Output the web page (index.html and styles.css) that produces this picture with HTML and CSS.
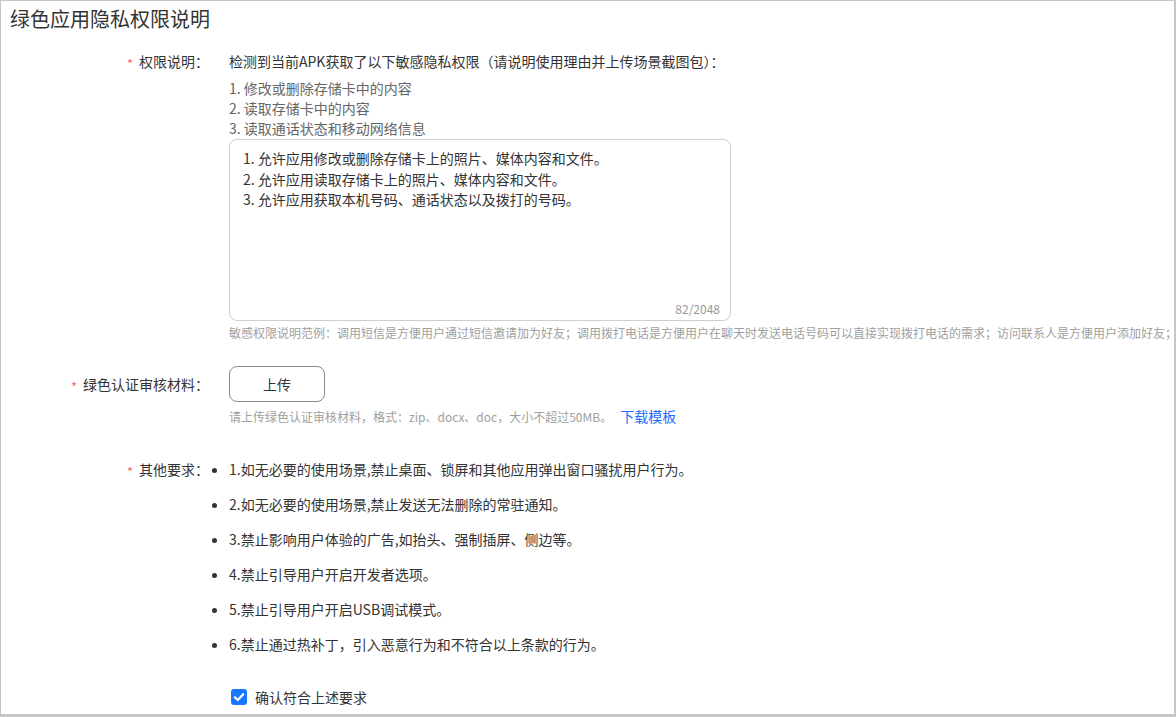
FILE: index.html
```html
<!DOCTYPE html>
<html lang="zh-CN">
<head>
<meta charset="utf-8">
<title>绿色应用隐私权限说明</title>
<link rel="stylesheet" href="styles.css">
</head>
<body>
<div class="page">
  <h1 class="title">绿色应用隐私权限说明</h1>

  <div class="row row-perm">
    <div class="label"><span class="req">*</span>权限说明：</div>
    <div class="content">
      <p class="intro">检测到当前APK获取了以下敏感隐私权限（请说明使用理由并上传场景截图包）：</p>
      <div class="perm-list">
        <div>1. 修改或删除存储卡中的内容</div>
        <div>2. 读取存储卡中的内容</div>
        <div>3. 读取通话状态和移动网络信息</div>
      </div>
      <div class="textarea-wrap">
        <textarea class="textarea">1. 允许应用修改或删除存储卡上的照片、媒体内容和文件。
2. 允许应用读取存储卡上的照片、媒体内容和文件。
3. 允许应用获取本机号码、通话状态以及拨打的号码。</textarea>
        <span class="count">82/2048</span>
      </div>
      <p class="hint hint-wide">敏感权限说明范例：调用短信是方便用户通过短信邀请加为好友；调用拨打电话是方便用户在聊天时发送电话号码可以直接实现拨打电话的需求；访问联系人是方便用户添加好友；</p>
    </div>
  </div>

  <div class="row row-upload">
    <div class="label label-tall"><span class="req">*</span>绿色认证审核材料：</div>
    <div class="content">
      <button class="upload-btn" type="button">上传</button>
      <p class="hint hint-upload">请上传绿色认证审核材料，格式：zip、docx、doc，大小不超过50MB。<a class="link" href="#">下载模板</a></p>
    </div>
  </div>

  <div class="row row-req">
    <div class="label"><span class="req">*</span>其他要求：</div>
    <div class="content">
      <ul class="req-list">
        <li>1.如无必要的使用场景,禁止桌面、锁屏和其他应用弹出窗口骚扰用户行为。</li>
        <li>2.如无必要的使用场景,禁止发送无法删除的常驻通知。</li>
        <li>3.禁止影响用户体验的广告,如抬头、强制插屏、侧边等。</li>
        <li>4.禁止引导用户开启开发者选项。</li>
        <li>5.禁止引导用户开启USB调试模式。</li>
        <li>6.禁止通过热补丁，引入恶意行为和不符合以上条款的行为。</li>
      </ul>
      <label class="confirm">
        <span class="checkbox"><svg viewBox="0 0 16 16" width="16" height="16"><path d="M3.8 8.2 L6.8 11 L12.2 5.3" fill="none" stroke="#fff" stroke-width="2.2" stroke-linecap="round" stroke-linejoin="round"/></svg></span>
        <span class="confirm-text">确认符合上述要求</span>
      </label>
    </div>
  </div>
</div>
</body>
</html>
```

FILE: styles.css
```css
* {
  box-sizing: border-box;
}

html, body {
  margin: 0;
  padding: 0;
  background: #ffffff;
}

body {
  font-family: "Noto Sans CJK SC", "Noto Sans", sans-serif;
  color: #333333;
  font-size: 14px;
}

.page {
  width: 1176px;
  height: 717px;
  overflow: hidden;
  border-style: solid;
  border-color: #c6c6c6;
  border-width: 1px 2px 3px 1px;
  padding-top: 4px;
}

.title {
  margin: 0 0 0 9px;
  font-size: 20px;
  line-height: 28px;
  font-weight: normal;
  color: #333333;
}

.row {
  display: flex;
  align-items: flex-start;
}

.label {
  flex: 0 0 208px;
  text-align: right;
  line-height: 20px;
  color: #333333;
  white-space: nowrap;
}

.label-tall {
  line-height: 36px;
}

.req {
  color: #f56c6c;
  margin-right: 6px;
  font-size: 13px;
  vertical-align: -2px;
}

.content {
  margin-left: 20px;
  flex: 1;
  min-width: 0;
}

.row-perm {
  margin-top: 18px;
}

.intro {
  margin: 0;
  line-height: 20px;
  color: #333333;
}

.perm-list {
  margin-top: 7px;
  line-height: 20px;
  color: #666666;
}

.textarea-wrap {
  position: relative;
  margin-top: 1px;
  width: 502px;
  height: 182px;
}

.textarea {
  display: block;
  width: 100%;
  height: 100%;
  border: 1px solid #cfcfcf;
  border-radius: 8px;
  padding: 8px 13px;
  font-family: inherit;
  font-size: 14px;
  line-height: 20.5px;
  color: #333333;
  resize: none;
  outline: none;
  background: #ffffff;
}

.count {
  position: absolute;
  right: 11px;
  bottom: 4px;
  font-size: 12px;
  line-height: 16px;
  color: #999999;
}

.hint {
  margin: 0;
  font-size: 12px;
  line-height: 18px;
  color: #a0a0a0;
  white-space: nowrap;
}

.hint-wide {
  margin-top: 3px;
}

.row-upload {
  margin-top: 24px;
}

.upload-btn {
  display: block;
  width: 96px;
  height: 36px;
  border: 1px solid #8a8a8a;
  border-radius: 8px;
  background: #ffffff;
  font-family: inherit;
  font-size: 14px;
  color: #333333;
  padding: 0;
  cursor: pointer;
}

.hint-upload {
  margin-top: 5px;
}

.link {
  color: #1a6dff;
  text-decoration: none;
  font-size: 14px;
  margin-left: 8px;
}

.row-req {
  margin-top: 33px;
}

.req-list {
  margin: 0;
  padding: 0;
  list-style: disc outside;
  display: flex;
  flex-direction: column;
  gap: 15px;
}

.req-list li {
  line-height: 20px;
  color: #333333;
}

.confirm {
  display: flex;
  align-items: center;
  gap: 8px;
  margin-top: 33px;
  margin-left: 2px;
  line-height: 20px;
}

.checkbox {
  width: 16px;
  height: 16px;
  border-radius: 3px;
  background: #1677ff;
  display: flex;
}

.confirm-text {
  color: #333333;
}
```
